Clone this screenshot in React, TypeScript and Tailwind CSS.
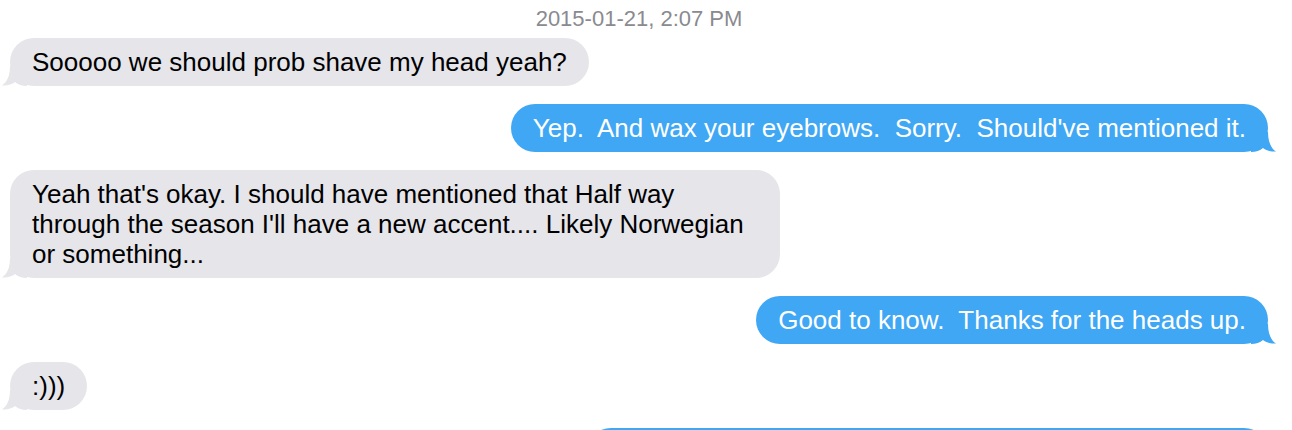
import { ReactNode } from 'react'

type Side = 'in' | 'out'

const Tail = ({ side }: { side: Side }) => (
    <svg
        width="26"
        height="22"
        viewBox="0 0 26 22"
        className={side === 'in'
            ? "absolute -left-[9px] bottom-0 fill-[#e5e5ea]"
            : "absolute -right-[9px] bottom-0 -scale-x-100 fill-[#3fa7f4]"}
    >
        <path d="M9 2 C9 12, 6 18, 1 21.5 C6 22, 11 20.5, 14 18 C17 20.5, 21 22, 26 22 L26 2 Z" />
    </svg>
)

const Bubble = ({ side, children }: { side: Side, children: ReactNode }) => {
    const isIn = side === 'in'
    return <div className={`flex ${isIn ? 'justify-start' : 'justify-end'}`}>
        <div className={`relative max-w-[770px] rounded-[24px] px-[22px] py-[9px] text-[26px] leading-[30px] ${isIn ? 'bg-[#e5e5ea] text-black' : 'bg-[#3fa7f4] text-white'}`}>
            <Tail side={side} />
            <span className="relative">{children}</span>
        </div>
    </div>
}

// message thread
const App = () => {
    const messages: Array<{ side: Side, text: string }> = [
        { side: 'in', text: "Sooooo we should prob shave my head yeah?" },
        { side: 'out', text: "Yep.  And wax your eyebrows.  Sorry.  Should've mentioned it." },
        { side: 'in', text: "Yeah that's okay. I should have mentioned that Half way through the season I'll have a new accent.... Likely Norwegian or something..." },
        { side: 'out', text: "Good to know.  Thanks for the heads up." },
        { side: 'in', text: ":)))" },
        { side: 'out', text: "Ha.  Can't wait to hear it.  See you on set Monday then." },
    ]

    return <div className="h-[430px] overflow-hidden bg-white font-['Liberation_Sans',Arial,sans-serif] whitespace-pre-wrap">
        <div className="flex flex-col gap-[18px] pl-[10px] pr-[24px]">
            <div className="h-[20px] pt-[8px] flex justify-center text-[22px] leading-[22px] text-[#8a8a8f]">2015-01-21, 2:07 PM</div>
            {messages.map((m, i) => <Bubble key={i} side={m.side}>{m.text}</Bubble>)}
        </div>
    </div>
}

export default App
